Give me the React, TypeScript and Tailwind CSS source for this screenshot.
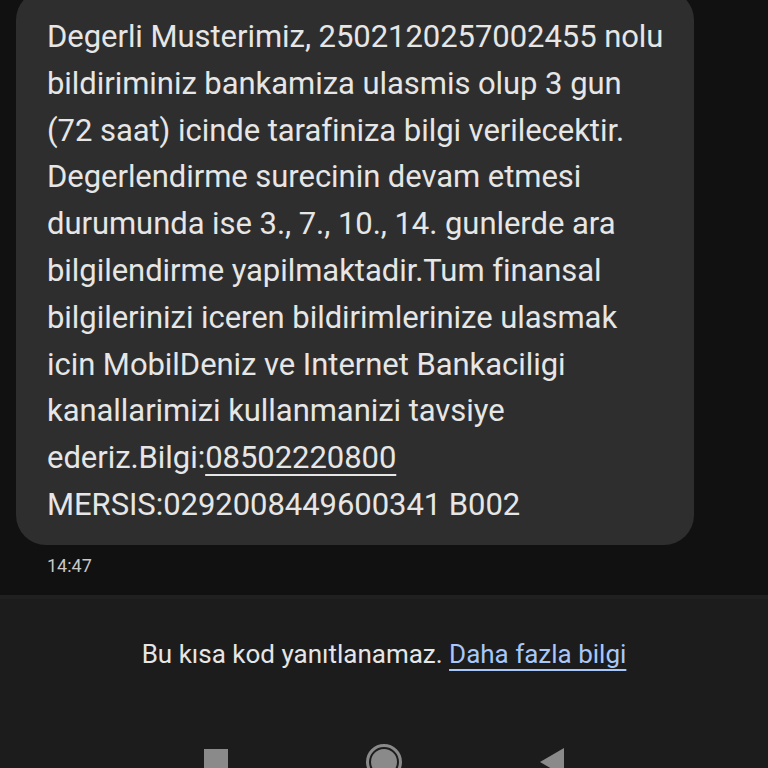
import React from 'react';

const lines = [
  'Degerli Musterimiz, 2502120257002455 nolu',
  'bildiriminiz bankamiza ulasmis olup 3 gun',
  '(72 saat) icinde tarafiniza bilgi verilecektir.',
  'Degerlendirme surecinin devam etmesi',
  'durumunda ise 3., 7., 10., 14. gunlerde ara',
  'bilgilendirme yapilmaktadir.Tum finansal',
  'bilgilerinizi iceren bildirimlerinize ulasmak',
  'icin MobilDeniz ve Internet Bankaciligi',
  'kanallarimizi kullanmanizi tavsiye',
];

const App: React.FC = () => {
  return (
    <div
      className="w-[768px] h-[768px] overflow-hidden bg-[#111111] flex flex-col text-[#e6e6e6]"
      style={{ fontFamily: 'Roboto, "Noto Sans", sans-serif' }}
    >
      {/* mesaj balonu */}
      <div className="flex flex-col px-4">
        <div className="-mt-[10px] w-[678px] rounded-[30px] bg-[#2e2e2e] pl-[31px] pr-4 pt-[24px] pb-[16px] text-[31px] leading-[46.8px] tracking-[-0.05px]">
          {lines.map((l) => (
            <div key={l} className="whitespace-nowrap">{l}</div>
          ))}
          <div className="whitespace-nowrap">
            ederiz.Bilgi:<span className="underline decoration-[2px] underline-offset-[6px]">08502220800</span>
          </div>
          <div className="whitespace-nowrap">MERSIS:0292008449600341 B002</div>
        </div>
        <div className="mt-[11px] pl-[31px] text-[18px] leading-[20px] text-[#c8c8c8]">14:47</div>
      </div>

      {/* alt panel */}
      <div className="mt-[19px] flex-1 border-t-[4px] border-[#202020] bg-[#1c1c1c] flex flex-col items-center">
        <div className="mt-[40px] text-[26px] leading-[30px] text-[#e6e6e6]">
          Bu kısa kod yanıtlanamaz.{' '}
          <span className="text-[#a8c7fa] underline decoration-[2px] underline-offset-[6px]">Daha fazla bilgi</span>
        </div>

        {/* navigasyon çubuğu */}
        <div className="mt-[75px] flex items-start justify-center gap-[138px]">
          <div className="mt-[5px] h-[24px] w-[24px] bg-[#8a8a8a]" />
          <svg width="36" height="36" viewBox="0 0 36 36">
            <circle cx="18" cy="18" r="16.5" fill="none" stroke="#8a8a8a" strokeWidth="3" />
            <circle cx="18" cy="18" r="13" fill="#8a8a8a" />
          </svg>
          <svg width="24" height="28" viewBox="0 0 24 28" className="mt-[4px]">
            <polygon points="24,0 24,28 0,14" fill="#8a8a8a" />
          </svg>
        </div>
      </div>
    </div>
  );
};

export default App;
